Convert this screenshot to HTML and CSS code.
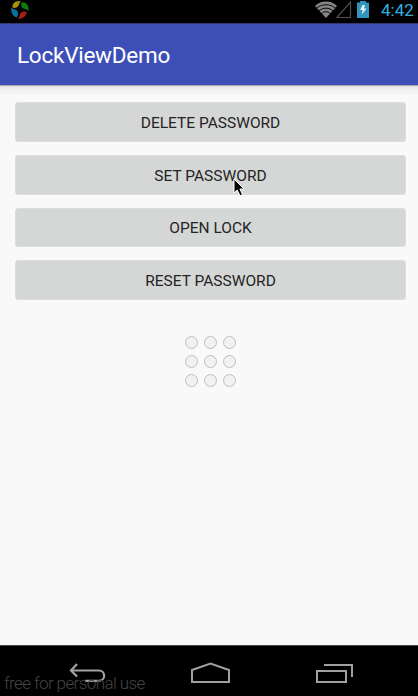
FILE: index.html
```html
<!DOCTYPE html>
<html lang="en">
<head>
<meta charset="utf-8">
<title>LockViewDemo</title>
<link rel="stylesheet" href="styles.css">
</head>
<body>
<div class="phone">
  <header class="status">
    <svg class="app-icon" width="20" height="20" viewBox="0 0 20 20">
      <path fill="#a89008" d="M2.500 7.500C2 3.500 5 .5 11 1 9.800 2.200 9.500 3 8.800 5 8 7.500 4.500 8.500 2.500 7.500z"/>
      <path fill="#087d10" d="M11.500 2.500c4-1.300 8 3 7 8.500-1.500-1.800-3-1.500-5-2.500-2.200-1-2.800-4-2-6z"/>
      <path fill="#a51c18" d="M7.500 18.500c1.500-1 1.700-2 2.200-3.500 1-3.500 4.800-4.300 7-3-.5 4.500-4.200 7.500-9.200 6.500z"/>
      <path fill="#0870a0" d="M1.200 7.500C3 10 6 8.500 7.500 11.500c1.200 2.500.5 4.500-.8 6C3 17 .5 12 1.200 7.500z"/>
    </svg>
    <div class="tray">
      <svg class="wifi" width="22" height="18" viewBox="0 0 22 18">
        <path fill="#858585" d="M0 5C6-.9 16-.9 22 5L11 17z"/>
        <g fill="none" stroke="#080808" stroke-width="1"><path d="M1 7.500c6-5 14-5 20 0M3.500 10.200c4.500-4 10.500-4 15 0M6 13c3-3 7-3 10 0"/></g>
      </svg>
      <svg class="signal" width="16" height="19" viewBox="0 0 16 19"><path d="M14.500 2v15.500H.8z" fill="none" stroke="#505050" stroke-width="1.200"/></svg>
      <svg class="battery" width="12" height="17" viewBox="0 0 12 17"><path fill="#3294bd" d="M3 0h6v1.500h3V17H0V1.500h3z"/><path fill="#e5f5f5" d="M5.500 4H8L7 7.500h2.500L4.800 13.500l.8-4.500H3.200z"/></svg>
      <span class="clock">4:42</span>
    </div>
  </header>
  <div class="appbar"><h1>LockViewDemo</h1></div>
  <main class="content">
    <button>DELETE PASSWORD</button>
    <button>SET PASSWORD</button>
    <button>OPEN LOCK</button>
    <button>RESET PASSWORD</button>
    <div class="lock"><i></i><i></i><i></i><i></i><i></i><i></i><i></i><i></i><i></i></div>
  </main>
  <nav class="navbar">
    <svg class="back" width="38" height="22" viewBox="0 0 38 22"><path d="M9 1L3 7.500 9 13.500M3.500 7.500H31a5 5 0 0 1 0 10.300H17" fill="none" stroke="#a3a1a3" stroke-width="2.200"/></svg>
    <svg class="home" width="39" height="22" viewBox="0 0 39 22"><path d="M1 8L19.500 1.500 38 8v12H1z" fill="none" stroke="#a0a0a0" stroke-width="2"/></svg>
    <svg class="recent" width="38" height="20" viewBox="0 0 38 20"><path d="M1 7h29v11H1zM8 1h28v12" fill="none" stroke="#a0a0a0" stroke-width="2"/></svg>
  </nav>
  <div class="watermark">free for personal use</div>
  <svg class="cursor" width="12" height="19" viewBox="0 0 12 19"><path d="M1 1v14l3.200-3 2.800 5.700 2.500-1.200L6.900 11H11z" fill="#000" stroke="#fff"/></svg>
</div>
</body>
</html>
```
FILE: styles.css
```css
* { box-sizing: border-box; }
body { margin: 0; font-family: Roboto, "Liberation Sans", sans-serif; }
.phone { position: relative; display: flex; flex-direction: column; width: 418px; height: 696px; overflow: hidden; background: #f9f9f9; }
.status { display: flex; justify-content: space-between; height: 23px; padding-left: 10px; background: #000; }
.status svg { flex: none; display: block; }
.tray { display: flex; padding-right: 4px; }
.wifi { margin: 1px 0 0; }
.signal { margin-left: -1px; }
.battery { margin: 1px 0 0 5px; }
.clock { width: 33px; margin-left: 12px; color: #30b0df; font-size: 17px; line-height: 20px; white-space: nowrap; }
.appbar { flex: none; display: flex; align-items: center; height: 62px; padding: 0 17px; background: #3d4fb7; border-top: 1px solid #34386e; box-shadow: 0 1px 1px #aaa, 0 4px 0 #ebebeb, 0 9px 0 #f2f2f2; }
h1 { margin: 0; color: #fff; font-size: 22.500px; font-weight: 400; letter-spacing: -.25px; line-height: 28px; white-space: nowrap; }
.content { flex: 1; display: flex; flex-direction: column; gap: 13px; padding: 17px 12px 0 15px; }
button { height: 39.800px; flex: none; padding: 2px 0 0; border: 1px solid #dcdedd; border-radius: 3px; background: #d5d7d6; color: #242424; font: 400 15.500px Roboto, sans-serif; }
.lock { display: grid; grid-template-columns: repeat(3, 13px); gap: 6px; align-self: center; margin: 22.800px 1px 0 0; }
.lock i { width: 13px; height: 13px; border: 1px solid #bdbdc8; border-radius: 50%; background: #f1f1f1; }
.navbar { flex: none; display: flex; height: 51px; padding: 16px 64px 0 68px; justify-content: space-between; background: #000; border-top: 1px solid #444; }
.navbar .back { margin-top: 1px; }
.navbar .home { margin-right: 2px; }
.navbar .recent { margin-top: 2px; }
.watermark { position: absolute; left: 4px; bottom: 2px; color: #444; font-size: 17px; font-weight: 300; letter-spacing: -.6px; line-height: 22px; white-space: nowrap; }
.cursor { position: absolute; left: 233px; top: 178px; }
```
